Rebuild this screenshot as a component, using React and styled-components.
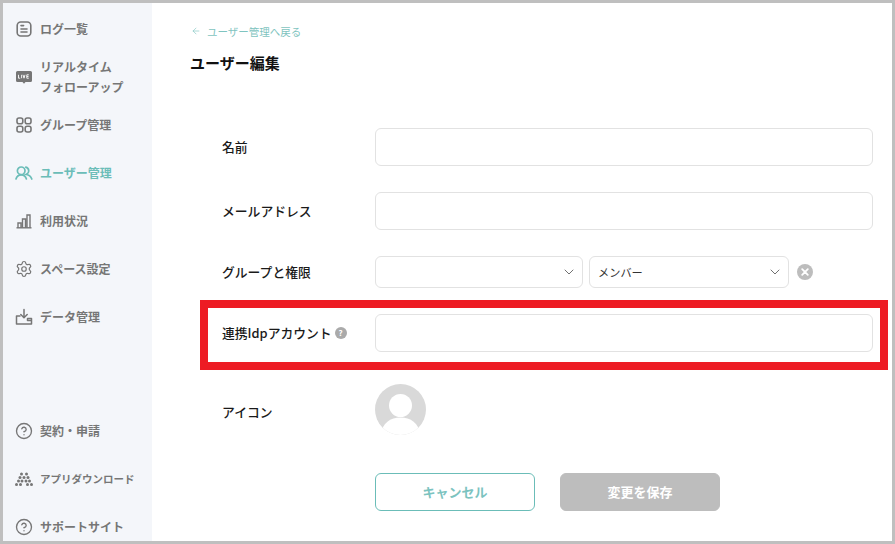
import React from 'react';
import styled, { createGlobalStyle } from 'styled-components';
import { ArrowLeft, ChevronDown, CircleHelp, Settings } from 'lucide-react';

const GlobalStyle = createGlobalStyle`
  html, body {
    margin: 0;
    padding: 0;
    background: #fff;
  }
  * {
    box-sizing: border-box;
  }
  body {
    font-family: "Noto Sans CJK JP", "Noto Sans", sans-serif;
  }
`;

const Shell = styled.div`
  width: 895px;
  height: 544px;
  border: 3px solid #bfbfbf;
  display: flex;
  overflow: hidden;
  background: #fff;
`;

const Sidebar = styled.nav`
  width: 149px;
  flex-shrink: 0;
  background: #f4f6fa;
  padding-top: 2px;
  display: flex;
  flex-direction: column;
`;

const NavGroup = styled.div`
  display: flex;
  flex-direction: column;
  margin-top: ${(p) => p.$top || 0}px;
`;

const NavItem = styled.a`
  height: 48px;
  flex-shrink: 0;
  padding-left: 12px;
  display: flex;
  align-items: center;
  gap: 7px;
  color: ${(p) => (p.$active ? '#6bbdb8' : '#767676')};
  font-size: ${(p) => p.$size || 12}px;
  font-weight: 700;
  line-height: 20px;
`;

const IconSlot = styled.span`
  width: 18px;
  height: 18px;
  flex-shrink: 0;
  display: flex;
  align-items: center;
  justify-content: center;
  color: inherit;
`;

const Main = styled.main`
  flex: 1;
  padding: 19px 0 0 38px;
`;

const BackLink = styled.a`
  height: 18px;
  display: flex;
  align-items: center;
  gap: 6px;
  padding-left: 1px;
  color: #7fc4c0;
  font-size: 10.5px;
  font-weight: 400;
`;

const Title = styled.h1`
  margin: 11px 0 0;
  color: #111;
  font-size: 15px;
  font-weight: 700;
  line-height: 24px;
`;

const Form = styled.form`
  margin-top: 53px;
  padding-left: 32px;
  display: flex;
  flex-direction: column;
  gap: 26px;
`;

const Row = styled.div`
  position: relative;
  width: 651px;
  display: grid;
  grid-template-columns: 153px 498px;
  align-items: center;
  margin-top: ${(p) => p.$top || 0}px;
`;

const Label = styled.label`
  display: flex;
  align-items: center;
  gap: 4px;
  padding-top: ${(p) => p.$drop || 0}px;
  color: #1a1a1a;
  font-size: 12.8px;
  font-weight: 500;
  line-height: 20px;
`;

const TextInput = styled.input`
  display: block;
  width: 498px;
  height: 38px;
  border: 1px solid #e2e2e2;
  border-radius: 6px;
  background: #fff;
  outline: none;
`;

const SelectRow = styled.div`
  display: flex;
  align-items: center;
  gap: 6px;
`;

const Select = styled.div`
  width: ${(p) => p.$width}px;
  height: 32px;
  padding: 0 5px 0 8px;
  border: 1px solid #e2e2e2;
  border-radius: 6px;
  display: flex;
  align-items: center;
  justify-content: space-between;
  color: #333;
  font-size: 11.2px;
`;

const ClearButton = styled.span`
  width: 16px;
  height: 16px;
  margin-left: 2px;
  border-radius: 50%;
  background: #bdbdbd;
  display: flex;
  align-items: center;
  justify-content: center;
`;

const HelpDot = styled.span`
  width: 12px;
  height: 12px;
  margin-left: -1px;
  border-radius: 50%;
  background: #aaa;
  color: #fff;
  font-size: 8px;
  font-weight: 700;
  line-height: 12px;
  text-align: center;
`;

/* annotation drawn on top of the screenshot */
const Highlight = styled.div`
  position: absolute;
  top: -14px;
  right: -15px;
  bottom: -18px;
  left: -22px;
  border: 8px solid #ed1c24;
  pointer-events: none;
`;

const Avatar = styled.svg`
  display: block;
  width: 51px;
  height: 51px;
`;

const Actions = styled.div`
  margin: 12px 0 0 153px;
  display: flex;
  gap: 25px;
`;

const Button = styled.button`
  width: 160px;
  height: 38px;
  border-radius: 6px;
  border: 1px solid ${(p) => (p.$primary ? '#bdbdbd' : '#6bbdb8')};
  background: ${(p) => (p.$primary ? '#bdbdbd' : '#fff')};
  color: ${(p) => (p.$primary ? '#fff' : '#7cc3bf')};
  font-family: inherit;
  font-size: 13px;
  font-weight: 700;
  padding: 0 0 2px;
`;

const LogIcon = () => (
  <svg width="16" height="16" viewBox="0 0 16 16" fill="none" stroke="currentColor" strokeWidth="1.6" strokeLinecap="round">
    <rect x="1.2" y="1" width="13.6" height="14" rx="3.5" />
    <path d="M5 4.6h2.6M5 8h6M5 11h6" />
  </svg>
);

const LiveIcon = () => (
  <svg width="18" height="16" viewBox="0 0 18 16">
    <path d="M2.500 2h13A1.500 1.500 0 0 1 17 3.500v8a1.500 1.500 0 0 1-1.500 1.500h-5L9 14.800 7.500 13h-5A1.500 1.500 0 0 1 1 11.500v-8A1.500 1.500 0 0 1 2.500 2z" fill="currentColor" />
    <path d="M3.500 5.800v3.400h1.700M6.600 5.800v3.400M8 5.800l1 3.400 1-3.400M13.800 5.800h-2v3.400h2M11.800 7.500h1.700" fill="none" stroke="#fff" strokeWidth="0.9" />
  </svg>
);

const GroupIcon = () => (
  <svg width="16" height="16" viewBox="0 0 16 16" fill="none" stroke="currentColor" strokeWidth="1.6">
    <rect x="1" y="1" width="5.800" height="5.800" rx="2" />
    <rect x="9.200" y="1" width="5.800" height="5.800" rx="2" />
    <rect x="1" y="9.200" width="5.800" height="5.800" rx="2" />
    <rect x="9.200" y="9.200" width="5.800" height="5.800" rx="2" />
  </svg>
);

const PeopleIcon = () => (
  <svg width="18" height="14" viewBox="0 0 18 14" fill="none" stroke="currentColor" strokeWidth="1.7" strokeLinecap="round">
    <circle cx="6.200" cy="4.800" r="3.800" />
    <path d="M1 13c.6-2.300 2.600-4.200 5.200-4.200s4.600 1.900 5.200 4.200" />
    <path d="M10.800 1.200a3.800 3.800 0 0 1 .6 7.200c2.600.5 4.500 2.300 5.400 4.600" />
  </svg>
);

const ChartIcon = () => (
  <svg width="16" height="16" viewBox="0 0 16 16" fill="none" stroke="currentColor" strokeWidth="1.400">
    <path d="M.5 14.800h15" />
    <path d="M2 14.800V10h3v4.800M6.500 14.800V6h3v8.800M11 14.800V2h3v12.800" />
  </svg>
);

const TrayIcon = () => (
  <svg width="18" height="18" viewBox="0 0 18 18" fill="none" stroke="currentColor" strokeWidth="1.500" strokeLinecap="round" strokeLinejoin="round">
    <path d="M9 1.500v8M5.800 6.500 9 9.700l3.200-3.200" />
    <path d="M5 8H1.500v8h15v-5.500h-4v2H16.500" />
  </svg>
);

const AppIcon = () => (
  <svg width="18" height="14" viewBox="0 0 18 14" fill="currentColor">
    <circle cx="6.500" cy="2" r="1.500" />
    <circle cx="11.500" cy="2" r="1.500" />
    <circle cx="5" cy="5.500" r="1.500" />
    <circle cx="9" cy="5.500" r="1.500" />
    <circle cx="13" cy="5.500" r="1.500" />
    <circle cx="3.500" cy="9" r="1.500" />
    <circle cx="7" cy="9" r="1.500" />
    <circle cx="11" cy="9" r="1.500" />
    <circle cx="14.500" cy="9" r="1.500" />
    <circle cx="1.500" cy="12.500" r="1.500" />
    <circle cx="5.500" cy="12.500" r="1.500" />
    <circle cx="12.500" cy="12.500" r="1.500" />
    <circle cx="16.500" cy="12.500" r="1.500" />
  </svg>
);

const mainNav = [
  { label: 'ログ一覧', icon: <LogIcon /> },
  { label: <>リアルタイム<br />フォローアップ</>, icon: <LiveIcon /> },
  { label: 'グループ管理', icon: <GroupIcon /> },
  { label: 'ユーザー管理', icon: <PeopleIcon />, active: true },
  { label: '利用状況', icon: <ChartIcon /> },
  { label: 'スペース設定', icon: <Settings size={18} strokeWidth={1.6} /> },
  { label: 'データ管理', icon: <TrayIcon /> },
];

const subNav = [
  { label: '契約・申請', icon: <CircleHelp size={18} strokeWidth={1.8} /> },
  { label: 'アプリダウンロード', icon: <AppIcon />, size: 10.5 },
  { label: 'サポートサイト', icon: <CircleHelp size={18} strokeWidth={1.8} /> },
];

const renderNav = (items) =>
  items.map((item, i) => (
    <NavItem key={i} $active={item.active} $size={item.size}>
      <IconSlot>{item.icon}</IconSlot>
      <span>{item.label}</span>
    </NavItem>
  ));

const App = () => {
  return (
    <>
      <GlobalStyle />
      <Shell>
        <Sidebar>
          <NavGroup>{renderNav(mainNav)}</NavGroup>
          <NavGroup $top={66}>{renderNav(subNav)}</NavGroup>
        </Sidebar>
        <Main>
          <BackLink>
            <ArrowLeft size={10} strokeWidth={1.5} />
            <span>ユーザー管理へ戻る</span>
          </BackLink>
          <Title>ユーザー編集</Title>
          <Form>
            <Row>
              <Label>名前</Label>
              <TextInput />
            </Row>
            <Row>
              <Label>メールアドレス</Label>
              <TextInput />
            </Row>
            <Row>
              <Label>グループと権限</Label>
              <SelectRow>
                <Select $width={208}>
                  <span />
                  <ChevronDown size={16} strokeWidth={1.4} color="#666" />
                </Select>
                <Select $width={200}>
                  <span>メンバー</span>
                  <ChevronDown size={16} strokeWidth={1.4} color="#666" />
                </Select>
                <ClearButton>
                  <svg width="8" height="8" viewBox="0 0 8 8" stroke="#fff" strokeWidth="1.800" strokeLinecap="round">
                    <path d="M1.200 1.200l5.600 5.600M6.800 1.200 1.200 6.800" />
                  </svg>
                </ClearButton>
              </SelectRow>
            </Row>
            <Row>
              <Label>
                連携Idpアカウント
                <HelpDot>?</HelpDot>
              </Label>
              <TextInput />
              <Highlight />
            </Row>
            <Row $top={6}>
              <Label $drop={4}>アイコン</Label>
              <Avatar viewBox="0 0 51 51">
                <defs>
                  <clipPath id="avatar-clip">
                    <circle cx="25.500" cy="25.500" r="25.500" />
                  </clipPath>
                </defs>
                <g clipPath="url(#avatar-clip)">
                  <rect width="51" height="51" fill="#d9d9d9" />
                  <circle cx="25.500" cy="21.500" r="11.500" fill="#fff" />
                  <ellipse cx="25.500" cy="48" rx="18.500" ry="14.500" fill="#fff" />
                </g>
              </Avatar>
            </Row>
            <Actions>
              <Button type="button">キャンセル</Button>
              <Button type="button" $primary>変更を保存</Button>
            </Actions>
          </Form>
        </Main>
      </Shell>
    </>
  );
};

export default App;
